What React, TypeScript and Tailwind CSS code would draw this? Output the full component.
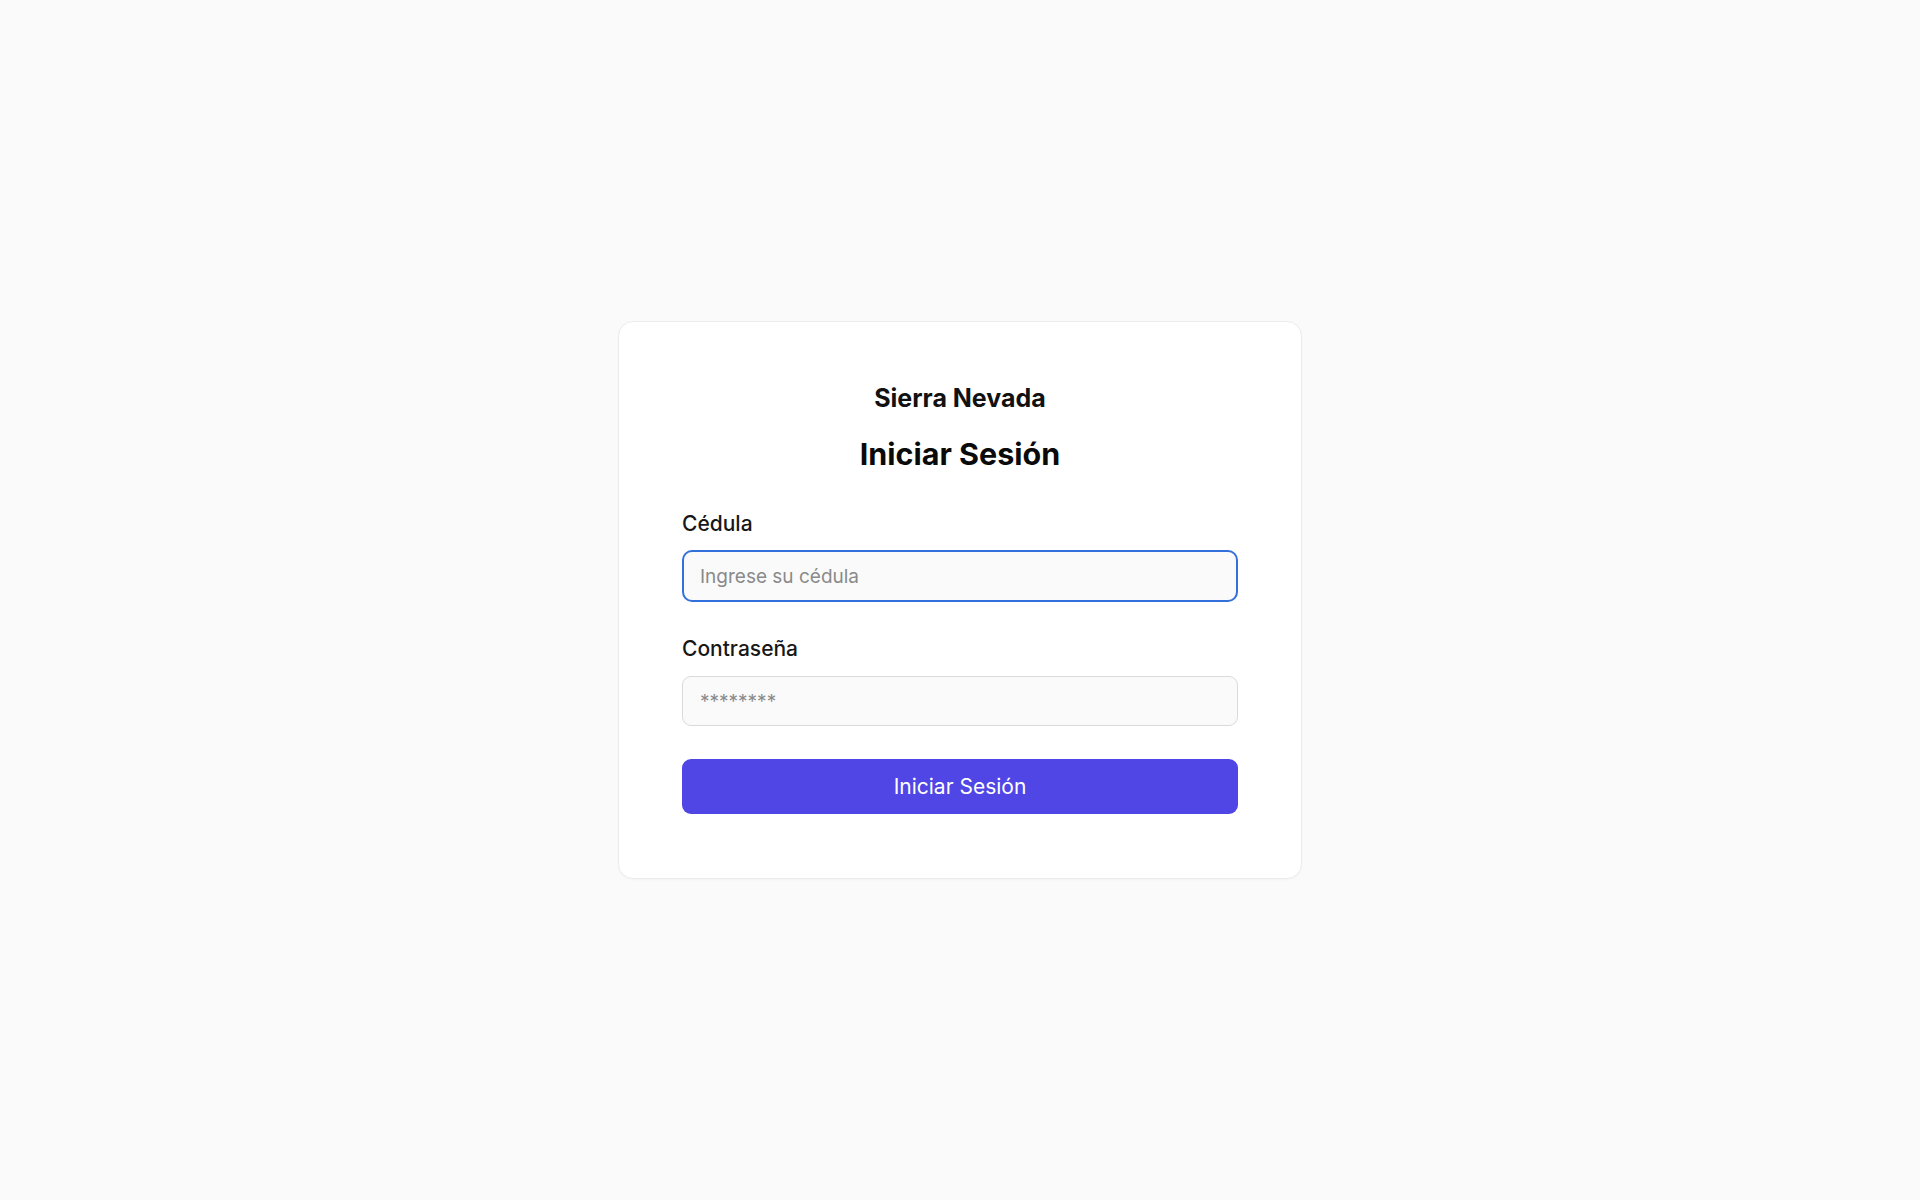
import { useState } from 'react';

// ── Login card ────────────────────────────────────────────────────────────────

export default function App() {
  const [cedula, setCedula] = useState('');
  const [password, setPassword] = useState('');

  return (
    <div
      className="min-h-screen w-full flex items-center justify-center bg-[#fafafa]"
      style={{ fontFamily: 'Inter, "Noto Sans", sans-serif' }}
    >
      <div className="w-[684px] rounded-[15px] border border-[#ececec] bg-white px-[63px] pt-[60px] pb-[64px] shadow-[0_1px_2px_rgba(0,0,0,0.03)]">
        <h2 className="text-center text-[25px] leading-[32px] font-bold text-[#111111]">
          Sierra Nevada
        </h2>
        <h1 className="mt-[22px] text-center text-[30.5px] leading-[36px] font-bold text-[#0a0a0a]">
          Iniciar Sesión
        </h1>

        <form className="flex flex-col" onSubmit={(e) => e.preventDefault()}>
          <label htmlFor="cedula" className="mt-[38px] text-[21px] leading-[28px] font-medium text-[#171717]">
            Cédula
          </label>
          <input
            id="cedula"
            type="text"
            value={cedula}
            onChange={(e) => setCedula(e.target.value)}
            placeholder="Ingrese su cédula"
            className="mt-[12px] h-[52px] w-full rounded-[10px] border-2 border-[#3470dc] bg-[#fafafa] px-[16px] text-[19px] text-[#171717] placeholder:text-[#8a8a8a] outline-none"
          />

          <label htmlFor="password" className="mt-[33px] text-[21px] leading-[28px] font-medium text-[#171717]">
            Contraseña
          </label>
          <input
            id="password"
            type="password"
            value={password}
            onChange={(e) => setPassword(e.target.value)}
            placeholder="********"
            className="mt-[13px] h-[50px] w-full rounded-[9px] border border-[#dadada] bg-[#fafafa] px-[17px] text-[19px] text-[#171717] placeholder:text-[#8a8a8a] outline-none"
          />

          <button
            type="submit"
            className="mt-[33px] h-[55px] w-full rounded-[9px] bg-[#4f46e5] text-[21px] font-normal text-white"
          >
            Iniciar Sesión
          </button>
        </form>
      </div>
    </div>
  );
}
